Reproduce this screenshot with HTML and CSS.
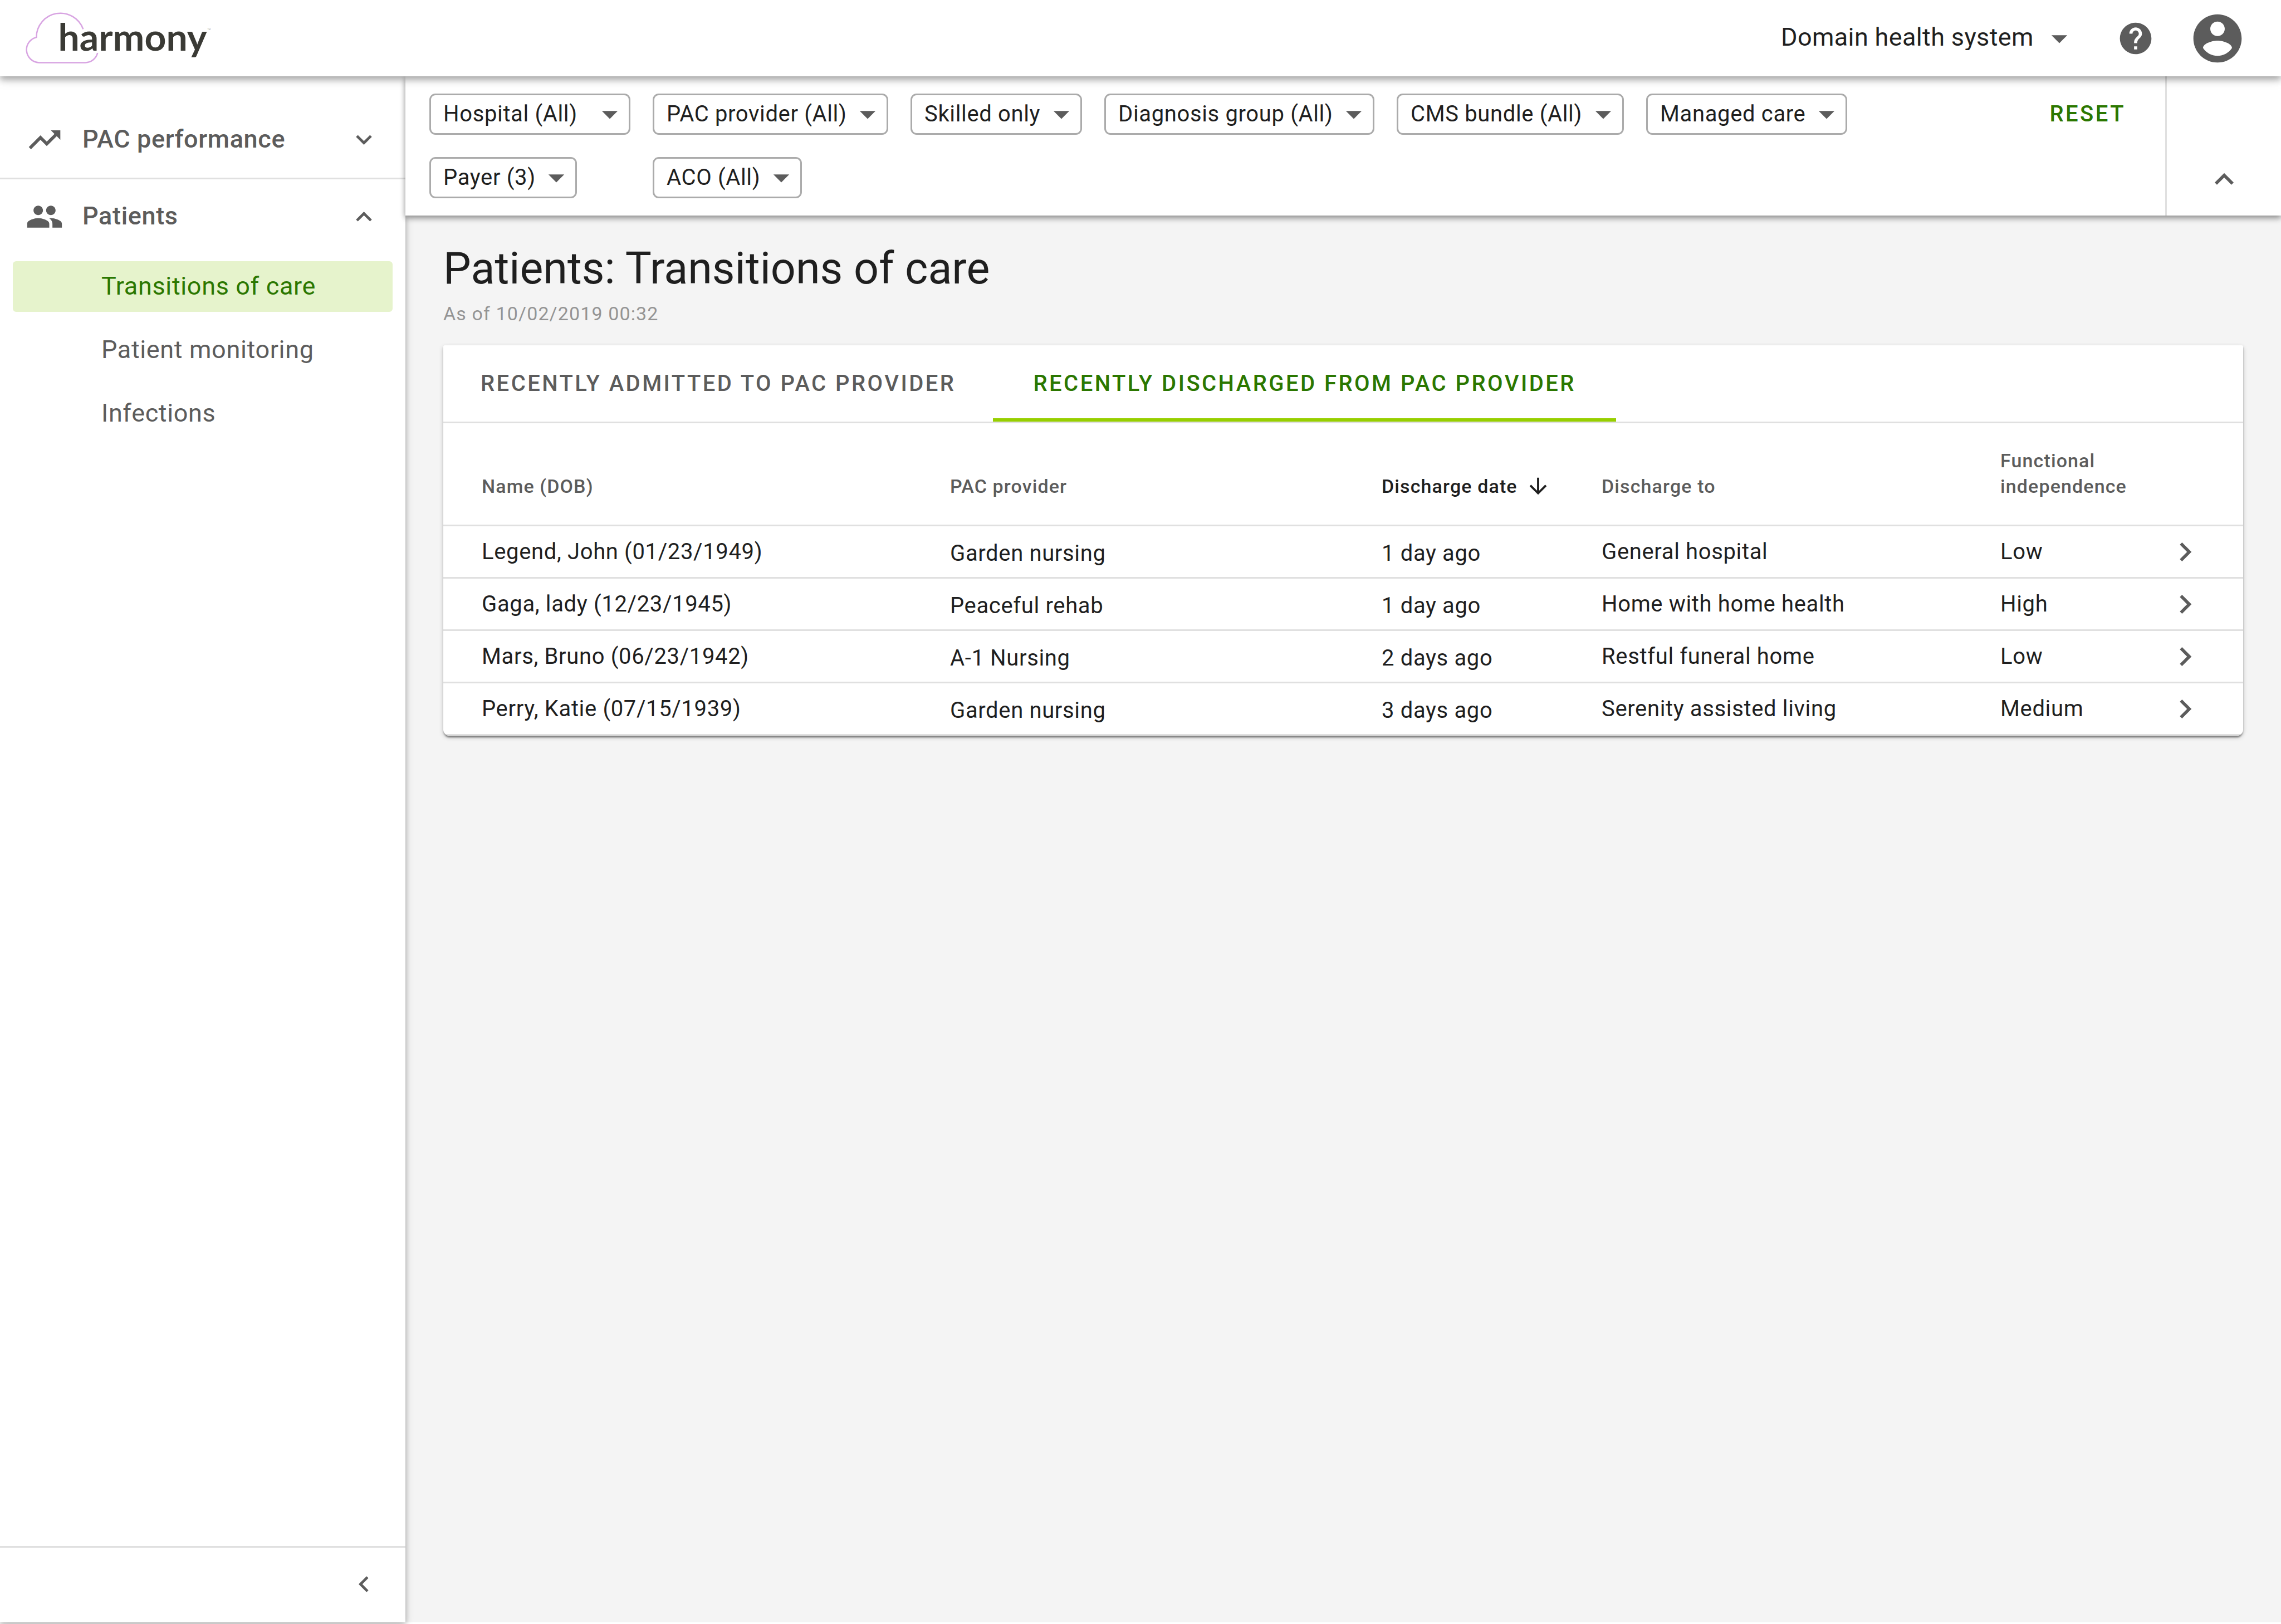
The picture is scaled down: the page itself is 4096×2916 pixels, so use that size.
FILE: index.html
```html
<!DOCTYPE html>
<html lang="en">
<head>
<meta charset="utf-8">
<title>Patients: Transitions of care</title>
<link rel="stylesheet" href="styles.css">
</head>
<body>
<header class="topbar">
  <a class="logo" href="#" aria-label="harmony home">
    <svg class="logo-art" viewBox="42 36 1080 300">
      <path class="logo-cloud" d="M382 135A137 137 0 0 0 116 181A73 73 0 0 0 131 325H394A73 73 0 0 0 464 270"/>
      <text class="logo-name" x="240" y="258">harmony</text>
      <text class="logo-tm" x="1089" y="141">TM</text>
    </svg>
  </a>
  <div class="topbar-tools">
    <span class="picker picker-plain">
      <select class="picker-select" aria-label="Organization"><option>Domain health system</option></select>
      <svg class="icon picker-arrow" viewBox="0 0 24 24"><path d="M7 10l5 5 5-5z"/></svg>
    </span>
    <button class="icon-button" type="button" aria-label="Help">
      <svg class="icon" viewBox="0 0 24 24"><path d="M12 2C6.48 2 2 6.48 2 12s4.48 10 10 10 10-4.48 10-10S17.52 2 12 2zm1 17h-2v-2h2v2zm2.07-7.75l-.9.92C13.45 12.9 13 13.5 13 15h-2v-.5c0-1.1.45-2.1 1.17-2.83l1.24-1.26c.37-.36.59-.86.59-1.41 0-1.1-.9-2-2-2s-2 .9-2 2H8c0-2.21 1.79-4 4-4s4 1.79 4 4c0 .88-.36 1.68-.93 2.25z"/></svg>
    </button>
    <button class="icon-button" type="button" aria-label="Account">
      <svg class="icon icon-large" viewBox="0 0 24 24"><path d="M12 2C6.48 2 2 6.48 2 12s4.48 10 10 10 10-4.48 10-10S17.52 2 12 2zm0 3c1.66 0 3 1.34 3 3s-1.34 3-3 3-3-1.34-3-3 1.34-3 3-3zm0 14.2c-2.5 0-4.71-1.28-6-3.22.03-1.99 4-3.08 6-3.08 1.99 0 5.97 1.09 6 3.08-1.29 1.94-3.5 3.22-6 3.22z"/></svg>
    </button>
  </div>
</header>

<div class="shell">
  <nav class="sidebar">
    <div class="nav-groups">
      <button class="nav-group" type="button" aria-expanded="false">
        <svg class="icon" viewBox="0 0 24 24"><path d="M16 6l2.29 2.29-4.88 4.88-4-4L2 16.59 3.41 18l6-6 4 4 6.3-6.29L22 12V6z"/></svg>
        <span class="nav-label">PAC performance</span>
        <svg class="icon icon-small" viewBox="0 0 24 24"><path d="M16.59 8.59L12 13.17 7.41 8.59 6 10l6 6 6-6z"/></svg>
      </button>
      <button class="nav-group" type="button" aria-expanded="true">
        <svg class="icon" viewBox="0 0 24 24"><path d="M16 11c1.66 0 2.99-1.34 2.99-3S17.66 5 16 5c-1.66 0-3 1.34-3 3s1.34 3 3 3zm-8 0c1.66 0 2.99-1.34 2.99-3S9.66 5 8 5C6.34 5 5 6.34 5 8s1.34 3 3 3zm0 2c-2.33 0-7 1.17-7 3.5V19h14v-2.5c0-2.33-4.67-3.5-7-3.5zm8 0c-.29 0-.62.02-.97.05 1.16.84 1.97 1.97 1.97 3.45V19h6v-2.5c0-2.33-4.67-3.5-7-3.5z"/></svg>
        <span class="nav-label">Patients</span>
        <svg class="icon icon-small" viewBox="0 0 24 24"><path d="M12 8l-6 6 1.41 1.41L12 10.83l4.59 4.58L18 14z"/></svg>
      </button>
      <ul class="nav-list">
        <li><a class="nav-link nav-link-active" href="#" aria-current="page">Transitions of care</a></li>
        <li><a class="nav-link" href="#">Patient monitoring</a></li>
        <li><a class="nav-link" href="#">Infections</a></li>
      </ul>
    </div>
    <div class="sidebar-footer">
      <button class="icon-button" type="button" aria-label="Collapse menu">
        <svg class="icon icon-small" viewBox="0 0 24 24"><path d="M15.41 7.41L14 6l-6 6 6 6 1.41-1.41L10.83 12z"/></svg>
      </button>
    </div>
  </nav>

  <div class="page">
    <section class="filters" aria-label="Filters">
      <div class="filter-grid">
        <span class="picker picker-wide"><select class="picker-select" aria-label="Hospital"><option>Hospital (All)</option></select><svg class="icon picker-arrow" viewBox="0 0 24 24"><path d="M7 10l5 5 5-5z"/></svg></span>
        <span class="picker"><select class="picker-select" aria-label="PAC provider"><option>PAC provider (All)</option></select><svg class="icon picker-arrow" viewBox="0 0 24 24"><path d="M7 10l5 5 5-5z"/></svg></span>
        <span class="picker"><select class="picker-select" aria-label="Skill level"><option>Skilled only</option></select><svg class="icon picker-arrow" viewBox="0 0 24 24"><path d="M7 10l5 5 5-5z"/></svg></span>
        <span class="picker"><select class="picker-select" aria-label="Diagnosis group"><option>Diagnosis group (All)</option></select><svg class="icon picker-arrow" viewBox="0 0 24 24"><path d="M7 10l5 5 5-5z"/></svg></span>
        <span class="picker"><select class="picker-select" aria-label="CMS bundle"><option>CMS bundle (All)</option></select><svg class="icon picker-arrow" viewBox="0 0 24 24"><path d="M7 10l5 5 5-5z"/></svg></span>
        <span class="picker"><select class="picker-select" aria-label="Care type"><option>Managed care</option></select><svg class="icon picker-arrow" viewBox="0 0 24 24"><path d="M7 10l5 5 5-5z"/></svg></span>
        <span class="picker"><select class="picker-select" aria-label="Payer"><option>Payer (3)</option></select><svg class="icon picker-arrow" viewBox="0 0 24 24"><path d="M7 10l5 5 5-5z"/></svg></span>
        <span class="picker"><select class="picker-select" aria-label="ACO"><option>ACO (All)</option></select><svg class="icon picker-arrow" viewBox="0 0 24 24"><path d="M7 10l5 5 5-5z"/></svg></span>
      </div>
      <button class="reset" type="button">RESET</button>
      <div class="filters-toggle">
        <button class="icon-button" type="button" aria-label="Collapse filters">
          <svg class="icon" viewBox="0 0 24 24"><path d="M12 8l-6 6 1.41 1.41L12 10.83l4.59 4.58L18 14z"/></svg>
        </button>
      </div>
    </section>

    <main class="content">
      <h1 class="title">Patients: Transitions of care</h1>
      <p class="as-of">As of 10/02/2019 00:32</p>
      <section class="card">
        <div class="tabs" role="tablist">
          <button class="tab" type="button" role="tab" aria-selected="false">RECENTLY ADMITTED TO PAC PROVIDER</button>
          <button class="tab tab-active" type="button" role="tab" aria-selected="true">RECENTLY DISCHARGED FROM PAC PROVIDER</button>
        </div>
        <table class="patients">
          <colgroup>
            <col class="col-name"><col class="col-provider"><col class="col-date"><col class="col-to"><col class="col-level"><col class="col-open">
          </colgroup>
          <thead>
            <tr>
              <th scope="col">Name (DOB)</th>
              <th scope="col">PAC provider</th>
              <th scope="col" aria-sort="descending"><span class="sorted">Discharge date <svg class="icon icon-sort" viewBox="0 0 24 24"><path d="M20 12l-1.41-1.41L13 16.17V4h-2v12.17l-5.58-5.59L4 12l8 8 8-8z"/></svg></span></th>
              <th scope="col">Discharge to</th>
              <th scope="col">Functional<br>independence</th>
              <td></td>
            </tr>
          </thead>
          <tbody>
            <tr><td>Legend, John (01/23/1949)</td><td class="low">Garden nursing</td><td class="low">1 day ago</td><td>General hospital</td><td>Low</td><td><a class="row-link" href="#" aria-label="Open Legend, John"><svg class="icon" viewBox="0 0 24 24"><path d="M10 6L8.59 7.41 13.17 12l-4.58 4.59L10 18l6-6z"/></svg></a></td></tr>
            <tr><td>Gaga, lady (12/23/1945)</td><td class="low">Peaceful rehab</td><td class="low">1 day ago</td><td>Home with home health</td><td>High</td><td><a class="row-link" href="#" aria-label="Open Gaga, lady"><svg class="icon" viewBox="0 0 24 24"><path d="M10 6L8.59 7.41 13.17 12l-4.58 4.59L10 18l6-6z"/></svg></a></td></tr>
            <tr><td>Mars, Bruno (06/23/1942)</td><td class="low">A-1 Nursing</td><td class="low">2 days ago</td><td>Restful funeral home</td><td>Low</td><td><a class="row-link" href="#" aria-label="Open Mars, Bruno"><svg class="icon" viewBox="0 0 24 24"><path d="M10 6L8.59 7.41 13.17 12l-4.58 4.59L10 18l6-6z"/></svg></a></td></tr>
            <tr><td>Perry, Katie (07/15/1939)</td><td class="low">Garden nursing</td><td class="low">3 days ago</td><td>Serenity assisted living</td><td>Medium</td><td><a class="row-link" href="#" aria-label="Open Perry, Katie"><svg class="icon" viewBox="0 0 24 24"><path d="M10 6L8.59 7.41 13.17 12l-4.58 4.59L10 18l6-6z"/></svg></a></td></tr>
          </tbody>
        </table>
      </section>
    </main>
  </div>
</div>
</body>
</html>
```

FILE: styles.css
```css
:root {
  --ink: #1f1f1f;
  --muted: #5c5c5c;
  --faint: #949494;
  --line: #e0e0e0;
  --green: #2b7700;
  --lime: #97cf00;
  --surface: #fff;
  --backdrop: #f4f4f4;
}

* {
  box-sizing: border-box;
}

body {
  margin: 0;
  min-height: 100vh;
  padding-bottom: 3px;
  display: flex;
  flex-direction: column;
  background: var(--surface);
  color: var(--ink);
  font-family: Roboto, "Liberation Sans", sans-serif;
  font-size: 40px;
  line-height: 46px;
  letter-spacing: 0.016em;
}

button,
select {
  margin: 0;
  padding: 0;
  border: 0;
  background: none;
  color: inherit;
  font: inherit;
  letter-spacing: inherit;
  cursor: pointer;
}

.icon {
  display: block;
  flex: none;
  width: 68px;
  height: 68px;
  fill: var(--muted);
}

.icon-small {
  width: 57px;
  height: 57px;
}

.icon-large {
  width: 104px;
  height: 104px;
}

.icon-sort {
  width: 46px;
  height: 46px;
  fill: var(--ink);
}

/* Top bar */

.topbar {
  position: relative;
  z-index: 3;
  height: 137px;
  padding: 0 62px 0 42px;
  display: flex;
  align-items: center;
  justify-content: space-between;
  background: var(--surface);
  box-shadow: 0 6px 11px rgba(0, 0, 0, 0.3), 0 8px 20px rgba(0, 0, 0, 0.08);
}

.logo-art {
  display: block;
  width: 341px;
  height: 95px;
}

.logo-cloud {
  fill: none;
  stroke: #d8a4e2;
  stroke-width: 8;
}

.logo-name {
  fill: #3a3a35;
  font-family: Lato, sans-serif;
  font-weight: 700;
  font-size: 215px;
  letter-spacing: 0;
}

.logo-tm {
  fill: #999;
  font-size: 12px;
  letter-spacing: 0;
}

.topbar-tools {
  display: flex;
  align-items: center;
  gap: 61px;
}

/* Drop-downs */

.picker {
  display: inline-grid;
  align-items: center;
  height: 74px;
  border: 3px solid #ababab;
  border-radius: 11px;
}

.picker-select,
.picker-arrow {
  grid-area: 1 / 1;
}

.picker-select {
  appearance: none;
  height: 68px;
  padding: 0 71px 0 22px;
}

.picker-arrow {
  justify-self: end;
  pointer-events: none;
}

.picker-wide {
  width: 361px;
}

.picker-plain {
  margin-right: 5px;
  border-color: transparent;
  font-size: 45px;
  letter-spacing: 0.008em;
}

.picker-plain .picker-select {
  padding: 0 80px 4px 22px;
}

/* Shell */

.shell {
  flex: 1;
  display: flex;
}

.sidebar {
  position: relative;
  z-index: 1;
  flex: none;
  width: 728px;
  display: flex;
  flex-direction: column;
  justify-content: space-between;
  background: var(--surface);
  box-shadow: 0 3px 9px rgba(0, 0, 0, 0.2), 0 3px 14px rgba(0, 0, 0, 0.2);
}

.nav-groups {
  padding-top: 45px;
}

.nav-group {
  width: 100%;
  height: 137px;
  padding: 0 46px;
  display: flex;
  align-items: center;
  gap: 34px;
  color: var(--muted);
  font-size: 45px;
  font-weight: 500;
  text-align: left;
}

.nav-group + .nav-group {
  border-top: 3px solid var(--line);
}

.nav-label {
  flex: 1;
  padding-bottom: 2px;
}

.nav-list {
  margin: 0;
  padding: 13px 23px;
  display: grid;
  gap: 23px;
  list-style: none;
  font-size: 45px;
}

.nav-link {
  display: flex;
  align-items: center;
  height: 91px;
  padding: 0 0 1px 159px;
  border-radius: 6px;
  color: var(--muted);
  text-decoration: none;
}

.nav-link-active {
  background: #e6f3cc;
  color: var(--green);
}

.sidebar-footer {
  display: flex;
  justify-content: flex-end;
  padding: 37px 46px 40px;
  border-top: 3px solid var(--line);
}

.page {
  flex: 1;
  min-width: 0;
  display: flex;
  flex-direction: column;
}

/* Filter bar */

.filters {
  position: relative;
  z-index: 2;
  display: flex;
  align-items: flex-start;
  background: var(--surface);
  box-shadow: 0 3px 9px rgba(0, 0, 0, 0.3), 0 6px 11px rgba(0, 0, 0, 0.2);
}

.filter-grid {
  flex: 1;
  display: grid;
  grid-template-columns: repeat(6, max-content);
  justify-items: start;
  gap: 40px;
  padding: 31px 43px;
}

.reset {
  height: 74px;
  margin: 31px 71px 0 0;
  color: var(--green);
  font-weight: 500;
  letter-spacing: 0.086em;
}

.filters-toggle {
  align-self: stretch;
  width: 208px;
  padding-bottom: 31px;
  display: flex;
  align-items: flex-end;
  justify-content: center;
  border-left: 3px solid var(--line);
}

/* Content */

.content {
  flex: 1;
  padding: 48px 68px;
  background: var(--backdrop);
}

.title {
  margin: 0;
  font-size: 79px;
  line-height: 94px;
  font-weight: 400;
  letter-spacing: 0;
}

.as-of {
  margin: 11px 0 34px;
  color: var(--faint);
  font-size: 34px;
  letter-spacing: 0.033em;
}

.card {
  overflow: hidden;
  border-radius: 3px 3px 11px 11px;
  background: var(--surface);
  box-shadow: 0 3px 9px rgba(0, 0, 0, 0.2), 0 6px 3px -3px rgba(0, 0, 0, 0.22), 0 3px 3px rgba(0, 0, 0, 0.24);
}

.tabs {
  display: flex;
  border-bottom: 3px solid var(--line);
}

.tab {
  height: 137px;
  padding: 0 67px;
  border-top: 6px solid transparent;
  border-bottom: 6px solid transparent;
  color: var(--muted);
  font-weight: 500;
  letter-spacing: 0.086em;
}

.tab-active {
  padding: 0 72px;
  border-bottom-color: var(--lime);
  color: var(--green);
}

.patients {
  width: 100%;
  table-layout: fixed;
  border-collapse: separate;
  border-spacing: 0;
}

.col-provider { width: 775px; }
.col-date { width: 395px; }
.col-to { width: 716px; }
.col-level { width: 298px; }
.col-open { width: 138px; }

.patients th,
.patients td {
  padding: 0;
  border-bottom: 3px solid var(--line);
  text-align: left;
}

.patients th:first-child,
.patients td:first-child {
  padding-left: 69px;
}

.patients th {
  padding-top: 44px;
  padding-bottom: 46px;
  vertical-align: bottom;
  color: var(--muted);
  font-size: 34px;
  font-weight: 500;
  letter-spacing: 0.033em;
}

.sorted {
  display: flex;
  gap: 14px;
  color: var(--ink);
}

.patients tbody td {
  height: 94px;
  vertical-align: middle;
}

.patients .low {
  padding-top: 6px;
}

.row-link {
  display: inline-block;
  vertical-align: middle;
}
```
